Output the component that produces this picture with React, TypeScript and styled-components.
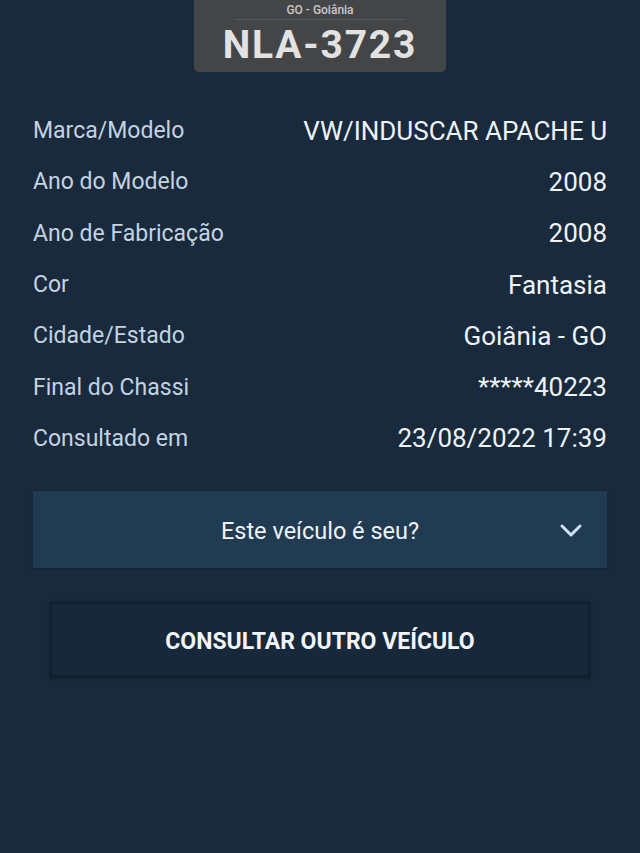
import React from "react";
import styled, { createGlobalStyle } from "styled-components";

const Global = createGlobalStyle`
  html, body { margin: 0; padding: 0; background: #182a3c; }
  body { font-family: Roboto, "Noto Sans", sans-serif; }
`;

const Page = styled.div`
  width: 640px;
  min-height: 853px;
  background: #182a3c;
  display: flex;
  flex-direction: column;
  align-items: center;
  box-sizing: border-box;
`;

const Plate = styled.div`
  width: 252px;
  height: 72px;
  background: #444546;
  border-radius: 0 0 5px 5px;
  display: flex;
  flex-direction: column;
  align-items: center;
  box-sizing: border-box;
  padding-top: 2px;
`;

const PlateState = styled.div`
  font-size: 12px;
  font-weight: 500;
  color: #c9c9c9;
  line-height: 16px;
  width: 170px;
  text-align: center;
  border-bottom: 1px solid #555657;
  padding-bottom: 1px;
`;

const PlateNumber = styled.div`
  font-size: 39px;
  font-weight: 700;
  color: #e2e2e2;
  letter-spacing: 1.8px;
  line-height: 46px;
  margin-top: 2px;
`;

const InfoList = styled.div`
  width: 574px;
  margin-top: 33px;
  display: flex;
  flex-direction: column;
`;

const Row = styled.div`
  display: flex;
  justify-content: space-between;
  align-items: center;
  height: 51.3px;
`;

const Label = styled.span`
  font-size: 23px;
  color: #c4d3e2;
`;

const Value = styled.span`
  font-size: 26px;
  color: #eef3f8;
`;

const Accordion = styled.div`
  width: 574px;
  height: 77px;
  margin-top: 27px;
  background: #213b52;
  box-shadow: 0 1px 3px rgba(0, 0, 0, 0.25);
  position: relative;
  display: flex;
  align-items: center;
  justify-content: center;
`;

const AccordionTitle = styled.span`
  font-size: 23.5px;
  color: #eef3f8;
  padding-top: 2px;
`;

const Chevron = styled.svg`
  position: absolute;
  right: 24px;
  top: 32px;
`;

const ActionButton = styled.button`
  width: 540px;
  height: 75px;
  margin-top: 34px;
  padding-top: 5px;
  background: #162839;
  border: 2px solid #11202e;
  box-shadow: 0 1px 4px rgba(0, 0, 0, 0.35);
  font-family: Roboto, sans-serif;
  font-weight: 700;
  font-size: 23px;
  color: #f2f5f8;
  cursor: pointer;
`;

const rows: [string, string][] = [
  ["Marca/Modelo", "VW/INDUSCAR APACHE U"],
  ["Ano do Modelo", "2008"],
  ["Ano de Fabricação", "2008"],
  ["Cor", "Fantasia"],
  ["Cidade/Estado", "Goiânia - GO"],
  ["Final do Chassi", "*****40223"],
  ["Consultado em", "23/08/2022 17:39"],
];

export default function App() {
  return (
    <>
      <Global />
      <Page>
        <Plate>
          <PlateState>GO - Goiânia</PlateState>
          <PlateNumber>NLA-3723</PlateNumber>
        </Plate>
        <InfoList>
          {rows.map(([l, v]) => (
            <Row key={l}>
              <Label>{l}</Label>
              <Value>{v}</Value>
            </Row>
          ))}
        </InfoList>
        <Accordion>
          <AccordionTitle>Este veículo é seu?</AccordionTitle>
          <Chevron width="24" height="16" viewBox="0 0 24 16">
            <path d="M3 3 L12 12 L21 3" fill="none" stroke="#cfe3f5" strokeWidth="3" strokeLinecap="round" strokeLinejoin="round" />
          </Chevron>
        </Accordion>
        <ActionButton>CONSULTAR OUTRO VEÍCULO</ActionButton>
      </Page>
    </>
  );
}
